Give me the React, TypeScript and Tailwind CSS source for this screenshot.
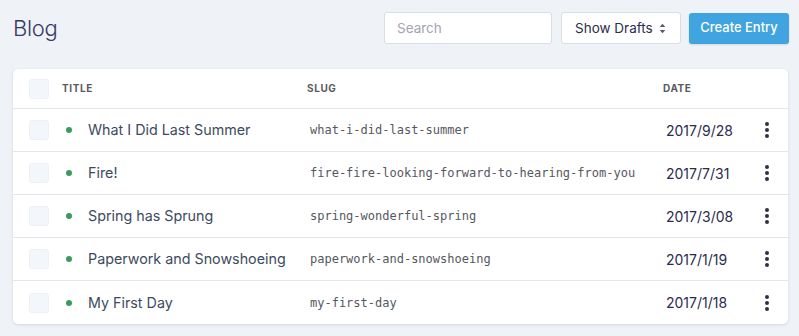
const entries = [
  { title: "What I Did Last Summer", slug: "what-i-did-last-summer", date: "2017/9/28" },
  { title: "Fire!", slug: "fire-fire-looking-forward-to-hearing-from-you", date: "2017/7/31" },
  { title: "Spring has Sprung", slug: "spring-wonderful-spring", date: "2017/3/08" },
  { title: "Paperwork and Snowshoeing", slug: "paperwork-and-snowshoeing", date: "2017/1/19" },
  { title: "My First Day", slug: "my-first-day", date: "2017/1/18" },
]

function Checkbox() {
  return <div className="h-5 w-5 shrink-0 rounded-[3px] border border-[#edf1f6] bg-[#f3f6fa]" />
}

function Kebab() {
  return (
    <div className="flex flex-col items-center gap-[2px]">
      <span className="h-1 w-1 rounded-full bg-[#2f3140]" />
      <span className="h-1 w-1 rounded-full bg-[#2f3140]" />
      <span className="h-1 w-1 rounded-full bg-[#2f3140]" />
    </div>
  )
}

export default function App() {
  return (
    <div className="h-[336px] w-[799px] bg-[#eff2f7] px-[13px] pt-3 font-['Inter',sans-serif]">
      <div className="flex items-center justify-between">
        <h1 className="text-[22px] font-light leading-8 tracking-[-0.3px] text-[#3a3a66]">Blog</h1>
        <div className="-mr-[3px] flex items-center">
          <input
            placeholder="Search"
            className="h-8 w-[168px] rounded-[3px] border border-[#d9dde4] bg-white px-3 text-[13.5px] text-[#333] placeholder:text-[#a2a4b4] outline-none"
          />
          <button className="ml-[9px] flex h-8 w-[120px] items-center justify-between rounded-[3px] border border-[#d9dde4] bg-white pl-[13px] pr-[14px] text-[13.5px] text-[#2d2d4d]">
            Show Drafts
            <svg width="7" height="11" viewBox="0 0 7 11" fill="#555a66">
              <path d="M3.5 0.8 L6.3 4 H0.7 Z" />
              <path d="M3.5 10.2 L6.3 7 H0.7 Z" />
            </svg>
          </button>
          <button className="ml-2 h-[31px] w-[100px] rounded-[3px] bg-[#3fa4e0] text-[13px] font-medium text-white shadow-[0_1px_2px_rgba(0,0,0,0.12)]">
            Create Entry
          </button>
        </div>
      </div>

      <div className="mt-[25px] w-[775px] rounded-[5px] bg-white shadow-[0_1px_3px_rgba(40,50,70,0.14)]">
        <div className="flex h-10 items-center border-b border-[#e3e6ea] pl-4 text-[10px] font-bold tracking-[0.6px] text-[#5a5a5e]">
          <Checkbox />
          <div className="ml-[13px] w-[245px]">TITLE</div>
          <div className="w-[356px]">SLUG</div>
          <div>DATE</div>
        </div>
        {entries.map((e, i) => (
          <div
            key={e.slug}
            className={`flex h-[43px] items-center pl-4 ${i < entries.length - 1 ? "border-b border-[#e3e6ea]" : ""}`}
          >
            <Checkbox />
            <div className="ml-[13px] flex w-[245px] items-center">
              <span className="ml-1 h-[6px] w-[6px] rounded-full bg-[#3b9a5e]" />
              <span className="ml-4 text-[14.3px] text-[#3d4a5e]">{e.title}</span>
            </div>
            <div className="w-[356px] pl-[3px] font-['DejaVu_Sans_Mono',monospace] text-[12px] text-[#55585e]">
              {e.slug}
            </div>
            <div className="w-[102px] pl-[3px] text-[14px] text-[#2b2b4d]">{e.date}</div>
            <Kebab />
          </div>
        ))}
      </div>
    </div>
  )
}
